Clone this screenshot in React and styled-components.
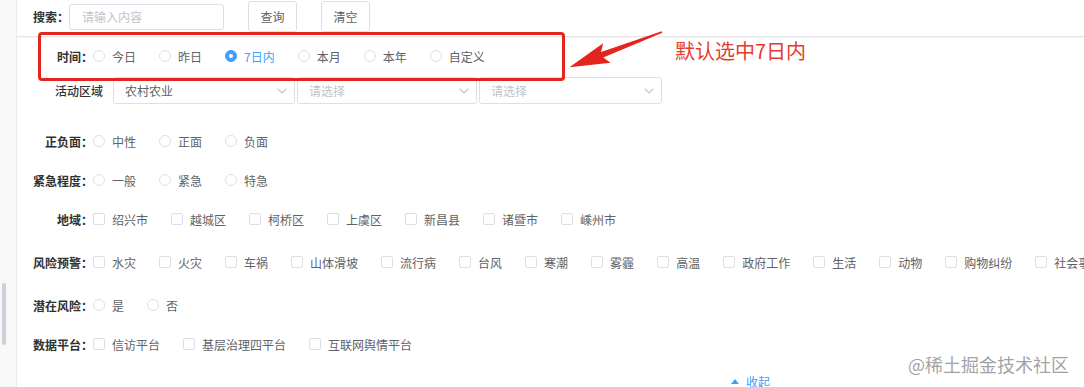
import React from 'react'
import styled, { createGlobalStyle } from 'styled-components'
import { ChevronDown } from 'lucide-react'

const GlobalStyle = createGlobalStyle`
  html, body {
    margin: 0;
    padding: 0;
    background: #fff;
  }
  body {
    font-family: "Noto Sans CJK SC", "Noto Sans", sans-serif;
    font-size: 12px;
    color: #606266;
  }
  * { box-sizing: border-box; }
`

const rows = [
  { label: '正负面：', type: 'radio', gap: 27, items: ['中性', '正面', '负面'] },
  { label: '紧急程度：', type: 'radio', gap: 19, items: ['一般', '紧急', '特急'] },
  { label: '地域：', type: 'check', gap: 19, items: ['绍兴市', '越城区', '柯桥区', '上虞区', '新昌县', '诸暨市', '嵊州市'] },
  {
    label: '风险预警：', type: 'check', gap: 23,
    items: ['水灾', '火灾', '车祸', '山体滑坡', '流行病', '台风', '寒潮', '雾霾', '高温', '政府工作', '生活', '动物', '购物纠纷', '社会事件']
  },
  { label: '潜在风险：', type: 'radio', gap: 23, items: ['是', '否'] },
  { label: '数据平台：', type: 'check', gap: 19, items: ['信访平台', '基层治理四平台', '互联网舆情平台'] },
]

const timeItems = ['今日', '昨日', '7日内', '本月', '本年', '自定义']

function App() {
  return (
    <Page>
      <GlobalStyle />
      <Sidebar>
        <Thumb />
      </Sidebar>
      <Main>
        <Form>
          <SearchRow>
            <SearchLabel>搜索：</SearchLabel>
            <SearchInput placeholder="请输入内容" />
            <Button>查询</Button>
            <Button>清空</Button>
          </SearchRow>
          <Divider />

          <OptionRow $gap={9}>
            <RowLabel>时间：</RowLabel>
            {timeItems.map((t) => (
              <Option key={t} $active={t === '7日内'}>
                <RadioDot $checked={t === '7日内'} />
                {t}
              </Option>
            ))}
          </OptionRow>

          <AreaRow>
            <AreaLabel>活动区域</AreaLabel>
            <Select $width={182}>
              <SelectText>农村农业</SelectText>
              <ChevronDown size={16} strokeWidth={1.6} color="#c0c4cc" />
            </Select>
            <Select $width={180}>
              <SelectText $placeholder>请选择</SelectText>
              <ChevronDown size={16} strokeWidth={1.6} color="#c0c4cc" />
            </Select>
            <Select $width={183}>
              <SelectText $placeholder>请选择</SelectText>
              <ChevronDown size={16} strokeWidth={1.6} color="#c0c4cc" />
            </Select>
          </AreaRow>

          {rows.map((row) => (
            <OptionRow key={row.label} $gap={row.gap}>
              <RowLabel>{row.label}</RowLabel>
              {row.items.map((item) => (
                <Option key={item}>
                  {row.type === 'radio' ? <RadioDot /> : <CheckBox />}
                  {item}
                </Option>
              ))}
            </OptionRow>
          ))}

          <Footer>
            <Caret />
            收起
          </Footer>
        </Form>
      </Main>

      <RedBox />
      <Arrow width="1084" height="387" viewBox="0 0 1084 387">
        <g transform="translate(662,32) rotate(159.2)">
          <polygon points="0,-0.9 64,-3 59,-10.5 99,0 59,10.5 64,3 0,0.9" fill="#e3261d" />
        </g>
      </Arrow>
      <Note>默认选中7日内</Note>
      <Watermark>@稀土掘金技术社区</Watermark>
    </Page>
  )
}

export default App

const Page = styled.div`
  position: relative;
  display: flex;
  width: 1084px;
  height: 387px;
  overflow: hidden;
`
const Sidebar = styled.div`
  width: 17px;
  flex-shrink: 0;
  background: #f8f8f9;
  border-right: 1px solid #ececee;
  padding: 283px 0 0 2px;
`
const Thumb = styled.div`
  width: 4px;
  height: 62px;
  border-radius: 2px;
  background: #cdd0d8;
`
const Main = styled.div`
  flex: 1;
  min-width: 0;
  overflow: hidden;
`
const Form = styled.div`
  width: 1467px;
  display: flex;
  flex-direction: column;
`
const SearchRow = styled.div`
  display: flex;
  align-items: center;
  height: 32px;
  padding-left: 16px;
`
const SearchLabel = styled.span`
  width: 36px;
  font-weight: 600;
  color: #303133;
`
const SearchInput = styled.input`
  width: 155px;
  height: 26px;
  margin-top: 1px;
  padding: 0 12px;
  border: 1px solid #dcdfe6;
  border-radius: 3px;
  font: inherit;
  color: #606266;
  outline: none;
  &::placeholder { color: #c0c4cc; }
`
const Button = styled.button`
  width: 49px;
  height: 31px;
  margin-left: 24px;
  margin-top: 1px;
  padding: 0;
  border: 1px solid #dcdfe6;
  border-radius: 3px;
  background: #fff;
  font: inherit;
  color: #606266;
`
const Divider = styled.div`
  height: 1px;
  margin-top: 4px;
  background: #e6e6e6;
  box-shadow: 0 1px 0 #f7f7f7;
`
const OptionRow = styled.div`
  display: flex;
  align-items: center;
  height: 20px;
  margin-top: ${(p) => p.$gap}px;
  white-space: nowrap;
`
const RowLabel = styled.span`
  width: 76px;
  flex-shrink: 0;
  text-align: right;
  font-weight: 600;
  color: #303133;
`
const Option = styled.label`
  display: inline-flex;
  align-items: center;
  flex-shrink: 0;
  margin-right: 23px;
  color: ${(p) => (p.$active ? '#409eff' : '#606266')};
`
const RadioDot = styled.span`
  position: relative;
  width: 12px;
  height: 12px;
  margin-right: 7px;
  border-radius: 50%;
  border: 1px solid ${(p) => (p.$checked ? '#409eff' : '#dcdfe6')};
  background: ${(p) => (p.$checked ? '#409eff' : '#fff')};
  &::after {
    content: '';
    display: ${(p) => (p.$checked ? 'block' : 'none')};
    position: absolute;
    left: 3px;
    top: 3px;
    width: 4px;
    height: 4px;
    border-radius: 50%;
    background: #fff;
  }
`
const CheckBox = styled.span`
  width: 12px;
  height: 12px;
  margin-right: 7px;
  border: 1px solid #dcdfe6;
  border-radius: 2px;
  background: #fff;
`
const AreaRow = styled.div`
  display: flex;
  align-items: center;
  gap: 2px;
  height: 27px;
  margin-top: 11px;
`
const AreaLabel = styled.span`
  width: 86px;
  margin-right: 8px;
  text-align: right;
  font-weight: 500;
  color: #303133;
`
const Select = styled.div`
  display: flex;
  align-items: center;
  justify-content: space-between;
  width: ${(p) => p.$width}px;
  height: 27px;
  padding: 0 4px 0 11px;
  border: 1px solid #dcdfe6;
  border-radius: 3px;
  background: #fff;
`
const SelectText = styled.span`
  color: ${(p) => (p.$placeholder ? '#c0c4cc' : '#606266')};
`
const Footer = styled.div`
  display: flex;
  align-items: center;
  justify-content: center;
  gap: 7px;
  height: 20px;
  margin-top: 17px;
  color: #409eff;
`
const Caret = styled.span`
  width: 0;
  height: 0;
  border-left: 4px solid transparent;
  border-right: 4px solid transparent;
  border-bottom: 5px solid #409eff;
`
const RedBox = styled.div`
  position: absolute;
  left: 38px;
  top: 32px;
  width: 527px;
  height: 49px;
  border: 3px solid #e3261d;
  border-radius: 4px;
  pointer-events: none;
`
const Arrow = styled.svg`
  position: absolute;
  left: 0;
  top: 0;
  pointer-events: none;
`
const Note = styled.div`
  position: absolute;
  left: 675px;
  top: 39px;
  font-size: 20px;
  line-height: 24px;
  color: #e53a2f;
  white-space: nowrap;
`
const Watermark = styled.div`
  position: absolute;
  left: 908px;
  top: 352px;
  font-size: 18px;
  line-height: 24px;
  color: rgba(120, 120, 120, 0.7);
  text-shadow: 0 0 1px #fff;
  white-space: nowrap;
`
